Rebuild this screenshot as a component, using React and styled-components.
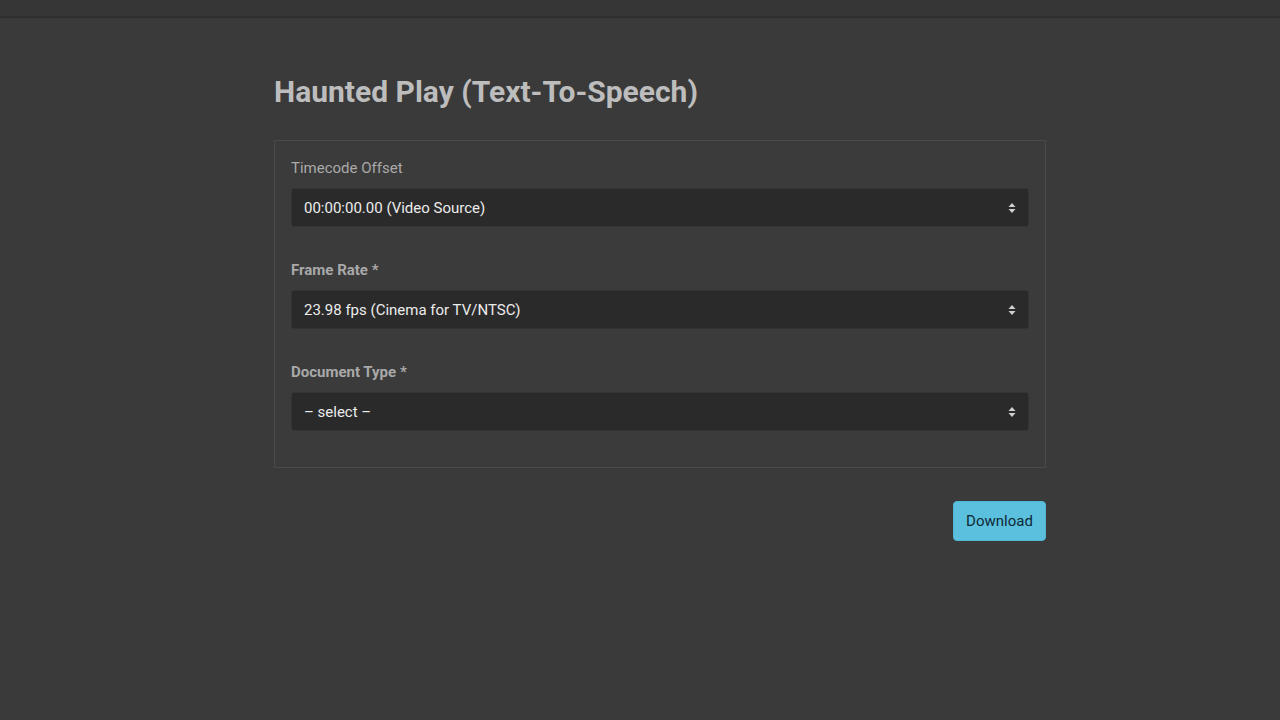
import React from "react";
import styled, { createGlobalStyle } from "styled-components";

const Global = createGlobalStyle`
  html, body { margin: 0; padding: 0; background: #3a3a3a; }
  body { font-family: Roboto, "Liberation Sans", Arial, sans-serif; }
  * { box-sizing: border-box; }
`;

const Page = styled.div`
  min-height: 720px;
  background: #3a3a3a;
`;

const TopBar = styled.div`
  height: 18px;
  background: #363636;
  border-bottom: 2px solid #2f2f2f;
`;

const Container = styled.main`
  width: 772px;
  margin-left: 274px;
  padding-top: 56px;
`;

const Title = styled.h1`
  margin: 0 0 30px;
  font-size: 30px;
  font-weight: 700;
  line-height: 36px;
  color: #bdbdbd;
`;

const Panel = styled.section`
  border: 1px solid #4a4a4a;
  background: #3b3b3b;
  padding: 17px 16px 36px;
  display: flex;
  flex-direction: column;
  gap: 33px;
`;

const Group = styled.div`
  display: flex;
  flex-direction: column;
  gap: 10px;
`;

const Label = styled.label`
  font-size: 15px;
  line-height: 20px;
  color: #a9a9a9;
  font-weight: ${(p) => (p.$bold ? 700 : 400)};
`;

const SelectBox = styled.div`
  position: relative;
  height: 39px;
  background: #2a2a2a;
  border: 1px solid #333;
  border-radius: 3px;
  display: flex;
  align-items: center;
  padding: 0 12px;
  color: #ececec;
  font-size: 15px;
`;

const Arrows = styled.svg`
  position: absolute;
  right: 12px;
  top: 50%;
  transform: translateY(-50%);
`;

const Footer = styled.div`
  display: flex;
  justify-content: flex-end;
  padding-top: 33px;
`;

const Button = styled.button`
  width: 93px;
  height: 40px;
  background: #5bc0de;
  border: 1px solid #4fb6d4;
  border-radius: 4px;
  color: #0e2a36;
  font-family: Roboto, "Liberation Sans", Arial, sans-serif;
  font-size: 15px;
  padding: 0;
  cursor: pointer;
`;

function Select({ children }) {
  return (
    <SelectBox>
      {children}
      <Arrows width="8" height="12" viewBox="0 0 8 12">
        <path d="M4 1 L7.5 5 H0.5 Z" fill="#d0d0d0" />
        <path d="M4 11 L7.5 7 H0.5 Z" fill="#d0d0d0" />
      </Arrows>
    </SelectBox>
  );
}

export default function App() {
  return (
    <Page>
      <Global />
      <TopBar />
      <Container>
        <Title>Haunted Play (Text-To-Speech)</Title>
        <Panel>
          <Group>
            <Label>Timecode Offset</Label>
            <Select>00:00:00.00 (Video Source)</Select>
          </Group>
          <Group>
            <Label $bold>Frame Rate *</Label>
            <Select>23.98 fps (Cinema for TV/NTSC)</Select>
          </Group>
          <Group>
            <Label $bold>Document Type *</Label>
            <Select>– select –</Select>
          </Group>
        </Panel>
        <Footer>
          <Button>Download</Button>
        </Footer>
      </Container>
    </Page>
  );
}
